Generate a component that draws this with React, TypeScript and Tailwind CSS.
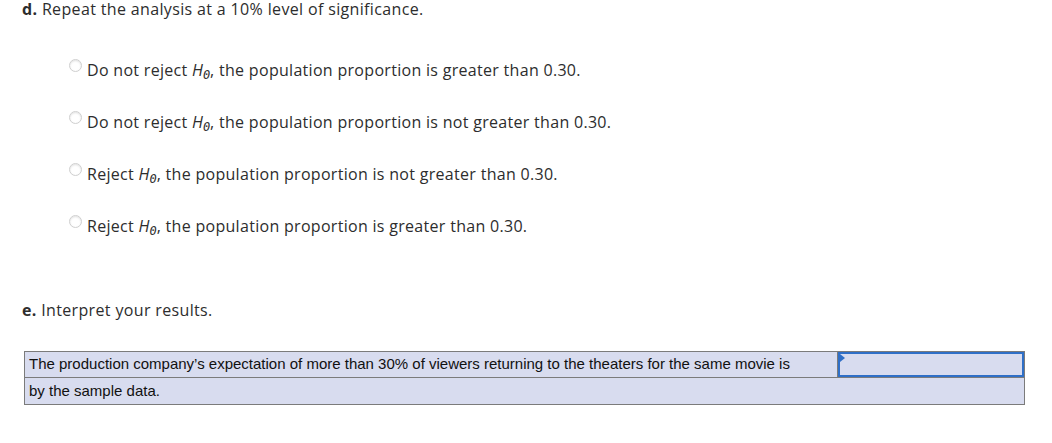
const OPTIONS = [
  { lead: "Do not reject", rest: ", the population proportion is greater than 0.30." },
  { lead: "Do not reject", rest: ", the population proportion is not greater than 0.30." },
  { lead: "Reject", rest: ", the population proportion is not greater than 0.30." },
  { lead: "Reject", rest: ", the population proportion is greater than 0.30." },
];

function H0() {
  return (
    <span className="italic tracking-normal">
      H
      <span className="relative top-[3px] font-['DejaVu_Sans_Mono',monospace] text-[12px]">0</span>
    </span>
  );
}

export default function App() {
  return (
    <div className="h-[443px] w-[1052px] bg-white pl-[22px] font-['Open_Sans',sans-serif] text-[#2d2d2d]">
      <p className="text-[16px] leading-[18px] tracking-[0.35px]">
        <b className="font-bold">d.</b> Repeat the analysis at a 10% level of significance.
      </p>

      <div className="mt-[43px] flex flex-col gap-[34px] pl-[47px]">
        {OPTIONS.map((o, i) => (
          <label key={i} className="flex h-[18px] items-center gap-[5px] text-[16px] tracking-[0.3px]">
            <span className="mb-[10px] h-[13px] w-[13px] shrink-0 rounded-full border border-[#cfcfcf] bg-white shadow-[inset_0_1px_2px_rgba(0,0,0,0.12)]" />
            <span>
              {o.lead} <H0 />
              {o.rest}
            </span>
          </label>
        ))}
      </div>

      <p className="mt-[66px] text-[16px] leading-[18px] tracking-[0.35px]">
        <b className="font-bold">e.</b> Interpret your results.
      </p>

      <div className="ml-[2px] mt-[32px] w-[1001px] border border-[#7b7b7b] bg-[#d8dcef] font-['Liberation_Sans',Arial,sans-serif] text-[15px] text-[#111]">
        <div className="flex h-[26px] border-b border-[#7b7b7b]">
          <div className="flex w-[813px] items-center border-r border-[#7b7b7b] pl-[4px]">
            The production company&rsquo;s expectation of more than 30% of viewers returning to the theaters for the same movie is
          </div>
          <div className="relative flex-1 border-2 border-[#2f6fc7]">
            <span className="absolute left-0 top-0 h-0 w-0 border-y-[4px] border-l-[5px] border-y-transparent border-l-[#2f6fc7]" />
          </div>
        </div>
        <div className="flex h-[26px] items-center pl-[4px]">by the sample data.</div>
      </div>
    </div>
  );
}
